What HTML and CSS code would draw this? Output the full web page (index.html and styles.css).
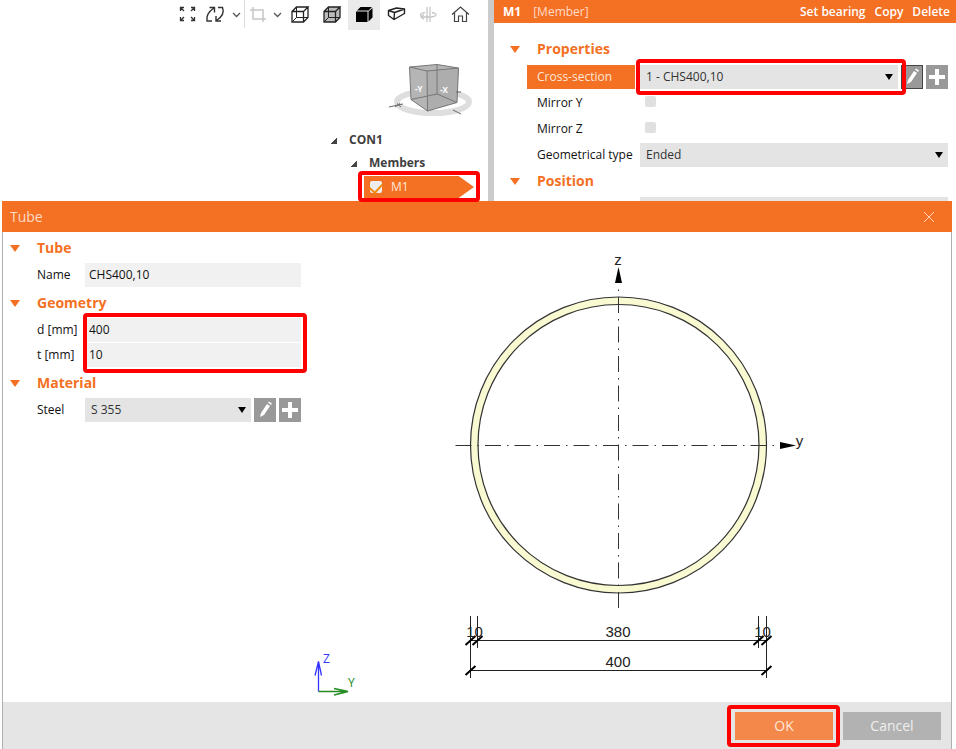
FILE: index.html
```
<!DOCTYPE html>
<html lang="en">
<head>
<meta charset="utf-8">
<title>Tube</title>
<link rel="stylesheet" href="styles.css">
</head>
<body>
<div class="app">
  <div class="workspace">
    <section class="scene">
      <div class="toolbar">
        <button class="tool" aria-label="Zoom all"><svg width="32" height="30" viewBox="0 0 32 30"><g fill="none" stroke="#333" stroke-width="1.3"><path d="M9.500 11V7.500H13M9.500 7.500l3.500 3.500M20 7.500h3.500V11M23.500 7.500L20 11M9.500 17v3.500H13M9.500 20.500L13 17M20 20.500h3.500V17M23.500 20.500L20 17"/></g></svg></button>
        <button class="tool tool-narrow" aria-label="Rotate"><svg width="24" height="30" viewBox="0 0 24 30"><g fill="none" stroke="#333" stroke-width="1.4"><path d="M9 21H4c-1-5 1-9 7-13M6.500 7.500H11.500V12.500"/><path d="M15 7.500h4.500c2 5 0 9-6 13M18 21h-5v-5"/></g></svg></button>
        <button class="tool tool-drop" aria-label="Rotate options"><svg width="16" height="30" viewBox="0 0 16 30"><path d="M5 13l3.500 3.500L12 13" fill="none" stroke="#555" stroke-width="1.300"/></svg></button>
        <span class="tool-divider"></span>
        <button class="tool tool-narrow" aria-label="Crop"><svg width="24" height="30" viewBox="0 0 24 30"><path d="M8 7v12h13M5 10h13v12" fill="none" stroke="#c6c6c6" stroke-width="1.500"/></svg></button>
        <button class="tool tool-drop" aria-label="Crop options"><svg width="16" height="30" viewBox="0 0 16 30"><path d="M5 13l3.500 3.500L12 13" fill="none" stroke="#555" stroke-width="1.300"/></svg></button>
        <button class="tool" aria-label="Wireframe"><svg width="32" height="30" viewBox="0 0 32 30"><g fill="none" stroke="#222" stroke-width="1.300"><path d="M8 11.500h11.500V22H8zM8 11.500L12.500 7H24l-4.500 4.500M24 7v10.500L19.500 22"/><path d="M12.500 7v10.500H24M12.500 17.500L8 22" stroke-width="1"/></g></svg></button>
        <button class="tool" aria-label="Transparent"><svg width="32" height="30" viewBox="0 0 32 30"><path d="M8 11.500L12.500 7H24v10.500L19.500 22H8z" fill="#bbb"/><g fill="none" stroke="#222" stroke-width="1.300"><path d="M8 11.500h11.500V22H8zM8 11.500L12.500 7H24l-4.500 4.500M24 7v10.500L19.500 22"/><path d="M12.500 7v10.500H24M12.500 17.500L8 22" stroke-width="1"/></g></svg></button>
        <button class="tool tool-active" aria-label="Solid"><svg width="32" height="30" viewBox="0 0 32 30"><path d="M8 11.500h11.500V22H8zM9 10.500L12.500 7H24l-3.500 3.500zM20.500 11.500L24.500 8v9.500l-4 4z" fill="#000"/></svg></button>
        <button class="tool" aria-label="Member view"><svg width="32" height="30" viewBox="0 0 32 30"><path d="M8.500 10.500l8-2.500 8 1-10 3.500zM8.500 10.500v5l5.500 4 .500-7M14 19.500l10.500-6V9" fill="none" stroke="#222" stroke-width="1.400" stroke-linejoin="round"/></svg></button>
        <button class="tool" aria-label="Section"><svg width="32" height="30" viewBox="0 0 32 30"><path d="M15 7v15M18 7v15M13 12.500c-6 1-6 4 0 4.500M20 12.500c6 1 5 4-1 4.500h-9M12 14.500l-3 2.500 3 2.500" fill="none" stroke="#c6c6c6" stroke-width="1.300"/></svg></button>
        <button class="tool" aria-label="Home view"><svg width="32" height="30" viewBox="0 0 32 30"><path d="M8 14.500L16.500 7l8.500 7.500M10.500 12.500v9h4V16h4v5.500h4v-9" fill="none" stroke="#444" stroke-width="1.200"/></svg></button>
      </div>
      <svg class="navcube" width="88" height="60" viewBox="388 60 88 60" aria-label="View cube">
        <ellipse cx="433" cy="102" rx="36" ry="11" fill="none" stroke="#dedede" stroke-width="6"/>
        <path d="M409.500 67l27.500-2.500 21.500 3.500-1.500 34.500L427.500 111 411 99.500z" fill="#b5b5b5"/>
        <path d="M427 71l31.500-3-1.500 34.500-29.500 8.500z" fill="#adadad"/>
        <path d="M409.500 67l27.500-2.500 21.500 3.500-31.500 3zM409.500 67l1.500 32.500 16.500 11.500 29.500-8.500 1.500-34.500M427 71l.500 40M437 64.500v29.500l-26 5.500M437 94l20 8.500" fill="none" stroke="#777"/>
        <path d="M389 107l14-3M395 107l5-3.500M401 107l-4-3.500M453 110l8 4M456 92h5" stroke="#666"/>
        <g class="cube-label"><text x="415" y="92">-Y</text><text x="440" y="93">-X</text></g>
      </svg>
      <div class="tree">
        <div class="tree-row level-1"><i class="tree-arrow"></i><span>CON1</span></div>
        <div class="tree-row level-2"><i class="tree-arrow"></i><span>Members</span></div>
        <div class="tree-item marked">
          <label class="tree-member"><input type="checkbox" class="member-check" checked>M1</label>
        </div>
      </div>
    </section>
    <div class="splitter"></div>
    <section class="inspector">
      <header class="inspector-head">
        <strong>M1</strong><span class="kind">[Member]</span>
        <nav class="actions"><button>Set bearing</button><button>Copy</button><button>Delete</button></nav>
      </header>
      <div class="props">
        <h2 class="group">Properties</h2>
        <div class="prop selected"><label for="cs">Cross-section</label>
          <div class="field"><div class="pick marked"><select id="cs"><option>1 - CHS400,10</option></select></div>
            <button class="square focused" aria-label="Edit cross-section"><svg width="22" height="24" viewBox="0 0 22 24"><path d="M6 19l1-4 6-9 3 2-6 9zM14 4.500l1-1 3 2-1 1.500z" fill="#fff"/></svg></button>
            <button class="square" aria-label="Add cross-section"><svg width="22" height="24" viewBox="0 0 22 24"><path d="M9 4h4v6h6v4h-6v6H9v-6H3v-4h6z" fill="#fff"/></svg></button></div></div>
        <div class="prop"><label for="my">Mirror Y</label><div class="field"><input type="checkbox" id="my" class="tick"></div></div>
        <div class="prop"><label for="mz">Mirror Z</label><div class="field"><input type="checkbox" id="mz" class="tick"></div></div>
        <div class="prop"><label for="gt">Geometrical type</label><div class="field"><div class="pick"><select id="gt"><option>Ended</option></select></div></div></div>
        <h2 class="group">Position</h2>
        <div class="prop"><span></span><div class="field"><div class="blank"></div></div></div>
      </div>
    </section>
  </div>

  <section class="dialog" role="dialog" aria-labelledby="dlg-title">
    <header class="dialog-head"><h1 id="dlg-title">Tube</h1>
      <button class="close" aria-label="Close"><svg width="12" height="12" viewBox="0 0 12 12"><path d="M1 1l10 10M11 1L1 11" stroke="#ffd5bd"/></svg></button></header>
    <div class="dialog-body">
      <form class="form">
        <fieldset><h2 class="group">Tube</h2>
          <div class="row"><label for="name">Name</label><input type="text" id="name" value="CHS400,10"></div></fieldset>
        <fieldset><h2 class="group">Geometry</h2>
          <div class="dims marked">
            <div class="row"><label for="d">d [mm]</label><input type="text" id="d" value="400"></div>
            <div class="row"><label for="t">t [mm]</label><input type="text" id="t" value="10"></div>
          </div></fieldset>
        <fieldset><h2 class="group">Material</h2>
          <div class="row"><label for="steel">Steel</label>
            <div class="field"><div class="pick"><select id="steel"><option>S 355</option></select></div>
              <button type="button" class="square" aria-label="Edit steel"><svg width="22" height="24" viewBox="0 0 22 24"><path d="M6 19l1-4 6-9 3 2-6 9zM14 4.500l1-1 3 2-1 1.500z" fill="#fff"/></svg></button>
              <button type="button" class="square" aria-label="Add steel"><svg width="22" height="24" viewBox="0 0 22 24"><path d="M9 4h4v6h6v4h-6v6H9v-6H3v-4h6z" fill="#fff"/></svg></button></div></div></fieldset>
      </form>
      <svg class="drawing" viewBox="310 232 641 470" aria-label="Tube section drawing">
        <circle cx="618.500" cy="445" r="144" fill="none" stroke="#fafad2" stroke-width="7.500"/>
        <circle cx="618.500" cy="445" r="148" class="outline"/>
        <circle cx="618.500" cy="445" r="140.500" class="outline"/>
        <path d="M455.500 445.500H780" class="axis"/>
        <path d="M618.500 608V284" class="axis"/>
        <path d="M618.500 267l3.500 16h-7zM796 445.500l-16-3.500v7z" fill="#000"/>
        <path d="M470.500 616v62M477.500 616v32M758.500 616v32M766.500 616v62M470 640.500h296M470 670.500h296" class="dim"/>
        <path d="M465.500 645l10-9M472.500 645l10-9M753.500 645l10-9M761.500 645l10-9M465.500 675l10-9M761.500 675l10-9" class="dim-tick"/>
        <g class="dim-text"><text x="618" y="265">z</text><text x="799.500" y="446">y</text><text x="618" y="637">380</text><text x="618" y="667">400</text><text x="474.500" y="637">10</text><text x="762.500" y="637">10</text></g>
        <g class="axis-name"><path d="M318.500 691.500V662M315 675.500l3.500-14 3 14" stroke="#33f" fill="none"/>
          <path d="M318.500 691.500H348M334 688.500l14 3-14 3.500" stroke="#228b22" fill="none"/>
          <text x="323" y="663" fill="#33f">Z</text><text x="348" y="687" fill="#228b22">Y</text></g>
      </svg>
    </div>
    <footer class="dialog-foot"><div class="marked"><button class="btn ok">OK</button></div><button class="btn">Cancel</button></footer>
  </section>
</div>
</body>
</html>
```
FILE: styles.css
```
* { box-sizing: border-box; }
body {
  margin: 0;
  background: #fff;
  color: #222;
  font: 12px/16px "Open Sans", "Noto Sans", sans-serif;
}
button, input, select { font: inherit; color: inherit; margin: 0; }
button { border: 0; padding: 0; background: none; }
svg { display: block; }
.app { display: flex; flex-direction: column; min-height: 100vh; }

.marked { position: relative; }
.marked::after {
  content: "";
  position: absolute;
  z-index: 2;
  inset: -7px -7px -7px -8px;
  border: 4px solid #f00;
  border-radius: 4px;
  pointer-events: none;
}

.workspace { display: flex; height: 201px; }
.scene { flex: 0 0 488px; display: flex; flex-direction: column; }
.splitter { flex: 0 0 6px; background: #cbcbcb; }
.inspector { flex: 1; min-width: 0; overflow: hidden; }

.toolbar { display: flex; height: 30px; padding-left: 171px; }
.tool { flex: 0 0 32px; }
.tool-narrow { flex-basis: 25px; }
.tool-drop { flex-basis: 16px; }
.tool-drop + .tool { margin-left: -1px; }
.tool-divider { flex: 0 0 1px; background: #ddd; height: 28px; }
.tool-divider + .tool-narrow { flex-basis: 24px; }
.tool-active { background: #eaeaea; }

.navcube { margin: 30px 0 0 388px; }
.cube-label { font-size: 8px; font-weight: 700; fill: #fff; }

.tree { margin-top: 8px; color: #404040; font-size: 12px; font-weight: 700; }
.tree-row { display: flex; align-items: center; gap: 12px; height: 23px; }
.level-1 { padding-left: 331px; }
.level-2 { padding-left: 351px; }
.tree-arrow {
  width: 6px;
  height: 6px;
  margin-top: 3px;
  background: linear-gradient(135deg, transparent 50%, #444 50%);
}
.tree-item { width: 110px; margin: 2px 0 0 364px; }
.tree-item.marked::after { inset: -5px -6px -4px; }
.tree-member {
  display: flex;
  align-items: center;
  gap: 9px;
  height: 22px;
  padding-left: 6px;
  background: #f47023;
  clip-path: polygon(0 0, 86% 0, 100% 50%, 86% 100%, 0 100%);
  color: #ffe6d8;
  font-weight: 500;
}
.member-check {
  appearance: none;
  width: 12px;
  height: 12px;
  border-radius: 2px;
  background: #eee;
  display: flex;
  justify-content: center;
}
.member-check:checked::before {
  content: "";
  width: 10px;
  height: 6px;
  margin-top: 2px;
  border: solid #f08a10;
  border-width: 0 0 2px 2px;
  transform: rotate(-48deg);
}

.inspector-head {
  display: flex;
  align-items: center;
  gap: 12px;
  height: 23px;
  padding: 0 6px 0 9px;
  background: #f47023;
  color: #fff;
}
.kind { color: #ffdcc8; }
.actions { display: flex; gap: 9px; margin-left: auto; font-weight: 600; }

.props { padding: 12px 8px 0 33px; }
.group {
  display: flex;
  align-items: center;
  gap: 17px;
  height: 28px;
  margin: 0 0 1px;
  color: #f47023;
  font-size: 14px;
  line-height: 20px;
  font-weight: 700;
}
.group::before {
  content: "";
  border: 5px solid transparent;
  border-top: 7px solid #f47023;
  border-bottom: 0;
}
.props .group { margin: 0 0 2px -17px; }
.prop {
  display: grid;
  grid-template-columns: 108px 1fr;
  gap: 5px;
  height: 24px;
  margin-bottom: 2px;
  color: #111;
}
.props .group:not(:first-child) { margin-top: -2px; }
.prop label { line-height: 24px; padding-left: 10px; font-weight: 500; white-space: nowrap; }
.selected label { background: #f47023; color: #ffe6d8; }
.field { display: flex; align-items: center; gap: 3px; min-width: 0; }
.pick { position: relative; flex: 1; min-width: 0; color: #333; }
.pick::before {
  content: "";
  position: absolute;
  right: 5px;
  top: 9px;
  border: 4px solid transparent;
  border-top: 6px solid #000;
  border-bottom: 0;
  pointer-events: none;
}
.pick.marked::after { inset: -6px -8px -6px -4px; }
select {
  appearance: none;
  display: block;
  width: 100%;
  height: 24px;
  padding: 0 6px;
  border: 0;
  border-radius: 0;
  background: #e4e4e4;
}
.tick {
  appearance: none;
  width: 11px;
  height: 11px;
  margin-left: 5px;
  margin-bottom: 3px;
  border-radius: 2px;
  background: #e0e0e0;
}
.square { flex: 0 0 22px; height: 24px; background: #999; }
.focused { outline: 1px solid #444; outline-offset: -1px; }
.blank { flex: 1; height: 24px; background: #e4e4e4; }

.dialog { flex: 1; display: flex; flex-direction: column; margin: 0 4px 0 2px; }
.dialog-head {
  display: flex;
  align-items: center;
  justify-content: space-between;
  height: 31px;
  padding: 0 17px 0 8px;
  background: #f47023;
}
.dialog-head h1 { margin: 0; color: #ffdcc8; font-size: 14px; font-weight: 400; }
.dialog-body {
  flex: 1;
  display: flex;
  border: solid #b0b0b0;
  border-width: 0 1px;
  background: #fff;
}
.form {
  flex: 0 0 307px;
  display: flex;
  flex-direction: column;
  gap: 2px;
  padding: 2px 9px 0 7px;
}
fieldset { border: 0; margin: 0; padding: 0; min-width: 0; }
.row {
  display: grid;
  grid-template-columns: 48px 1fr;
  height: 24px;
  margin-left: 27px;
  line-height: 24px;
  color: #111;
}
.row label { font-weight: 500; white-space: nowrap; }
.row input {
  min-width: 0;
  width: 100%;
  border: 0;
  padding: 0 4px;
  background: #f1f1f1;
  font-weight: 500;
}
.dims { display: grid; gap: 1px; }
.dims.marked::after { inset: -5px -6px -6px 73px; }
.drawing { flex: 1; min-width: 0; height: auto; align-self: flex-start; }
.outline { fill: none; stroke: #333; stroke-width: 1.200; }
.axis { fill: none; stroke: #333; stroke-dasharray: 16 6 1.500 6; }
.dim { fill: none; stroke: #222; }
.dim-tick { fill: none; stroke: #000; stroke-width: 2; }
.dim-text {
  font: 15px "Liberation Sans", Arial, sans-serif;
  text-anchor: middle;
  fill: #222;
}
.axis-name { font: 12px "Open Sans", sans-serif; stroke-width: 1.300; }

.dialog-foot {
  display: flex;
  align-items: flex-start;
  justify-content: flex-end;
  gap: 10px;
  height: 47px;
  padding: 10px 10px 0;
  border: solid #b0b0b0;
  border-width: 0 1px;
  background: #e5e5e5;
}
.btn { display: block; width: 98px; height: 28px; background: #b2b2b2; color: #eee; font-size: 14px; }
.ok { background: #f4874a; color: #ffe6d8; }
```
